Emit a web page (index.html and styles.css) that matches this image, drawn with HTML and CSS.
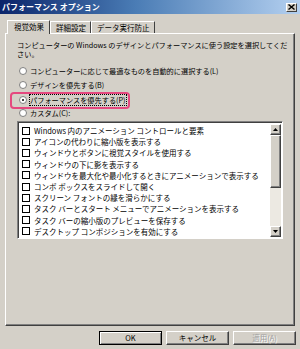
FILE: index.html
```html
<!DOCTYPE html>
<html lang="ja">
<head>
<meta charset="utf-8">
<link rel="stylesheet" href="styles.css">
</head>
<body>
<div class="dialog">
  <div class="titlebar">
    <span class="title">パフォーマンス オプション</span>
    <span class="close">
      <svg width="7" height="6" viewBox="0 0 7 6"><path d="M0.5 0.5 L6.5 5.5 M6.5 0.5 L0.5 5.5" stroke="#000" stroke-width="1.4"/></svg>
    </span>
  </div>
  <div class="tabs">
    <div class="tab active">視覚効果</div>
    <div class="tab">詳細設定</div>
    <div class="tab">データ実行防止</div>
  </div>
  <div class="panel">
    <p class="desc">コンピューターの Windows のデザインとパフォーマンスに使う設定を選択してくだ<br>さい。</p>
    <div class="radio"><span class="dot"></span><span>コンピューターに応じて最適なものを自動的に選択する(L)</span></div>
    <div class="radio"><span class="dot"></span><span>デザインを優先する(B)</span></div>
    <div class="radio"><span class="hl"><span class="dot on"></span><span class="focus">パフォーマンスを優先する(P)</span></span></div>
    <div class="radio"><span class="dot"></span><span>カスタム(C):</span></div>
    <div class="listbox">
      <ul class="items">
        <li><span class="cb"></span>Windows 内のアニメーション コントロールと要素</li>
        <li><span class="cb"></span>アイコンの代わりに縮小版を表示する</li>
        <li><span class="cb"></span>ウィンドウとボタンに視覚スタイルを使用する</li>
        <li><span class="cb"></span>ウィンドウの下に影を表示する</li>
        <li><span class="cb"></span>ウィンドウを最大化や最小化するときにアニメーションで表示する</li>
        <li><span class="cb"></span>コンボ ボックスをスライドして開く</li>
        <li><span class="cb"></span>スクリーン フォントの縁を滑らかにする</li>
        <li><span class="cb"></span>タスク バーとスタート メニューでアニメーションを表示する</li>
        <li><span class="cb"></span>タスク バーの縮小版のプレビューを保存する</li>
        <li><span class="cb"></span>デスクトップ コンポジションを有効にする</li>
      </ul>
      <div class="scrollbar">
        <div class="sbtn"><svg width="5" height="3" viewBox="0 0 5 3"><path d="M0 3 L2.5 0 L5 3Z" fill="#000"/></svg></div>
        <div class="thumb"></div>
        <div class="track"></div>
        <div class="sbtn"><svg width="5" height="3" viewBox="0 0 5 3"><path d="M0 0 L2.5 3 L5 0Z" fill="#000"/></svg></div>
      </div>
    </div>
  </div>
  <div class="buttons">
    <div class="btn default">OK</div>
    <div class="btn">キャンセル</div>
    <div class="btn disabled">適用(A)</div>
  </div>
</div>
</body>
</html>
```
FILE: styles.css
```css
html, body {
  margin: 0;
  padding: 0;
}
body {
  width: 300px;
  height: 349px;
  overflow: hidden;
  background: #d4d0c8;
  font-family: "Noto Sans CJK JP", "Liberation Sans", sans-serif;
  font-size: 7.5px;
  color: #000;
}
.dialog {
  width: 300px;
  height: 349px;
  display: flex;
  flex-direction: column;
}
.titlebar {
  height: 14px;
  background: linear-gradient(to right, #0a246a 0%, #4a7cb5 45%, #b4d0f0 100%);
  display: flex;
  align-items: center;
  justify-content: space-between;
  padding: 0 3px 0 2px;
}
.title {
  color: #fff;
  font-weight: bold;
  font-size: 8px;
  line-height: 14px;
}
.close {
  width: 11px;
  height: 9px;
  background: #d4d0c8;
  border-top: 1px solid #fff;
  border-left: 1px solid #fff;
  border-right: 1px solid #404040;
  border-bottom: 1px solid #404040;
  display: flex;
  align-items: center;
  justify-content: center;
  box-sizing: border-box;
}
.tabs {
  display: flex;
  align-items: flex-end;
  padding-left: 7px;
  margin-top: 6px;
  height: 13px;
  position: relative;
  z-index: 1;
}
.tab {
  height: 11px;
  line-height: 11px;
  padding: 0 4px 0 5px;
  border-top: 1px solid #fff;
  border-left: 1px solid #fff;
  border-right: 1px solid #404040;
  box-sizing: content-box;
  white-space: nowrap;
}
.tab.active {
  height: 13px;
  line-height: 12px;
  padding: 0 5px 0 6px;
  background: #d4d0c8;
  margin-bottom: -1px;
}
.panel {
  margin: 0 5px;
  border-top: 1px solid #fff;
  border-left: 1px solid #fff;
  border-right: 1px solid #404040;
  border-bottom: 1px solid #404040;
  box-shadow: inset -1px -1px 0 #808080;
  padding: 7px 11px 0 11px;
  box-sizing: border-box;
  height: 293px;
}
.desc {
  margin: 0;
  line-height: 9px;
  font-size: 7.2px;
  white-space: nowrap;
}
.radio {
  height: 14px;
  display: flex;
  align-items: center;
  gap: 3px;
  font-size: 7.2px;
  white-space: nowrap;
}
.desc + .radio {
  margin-top: 5px;
}
.dot {
  width: 8px;
  height: 8px;
  border-radius: 50%;
  background: #fff;
  border: 1px solid #808080;
  box-sizing: border-box;
  margin-left: 2px;
  position: relative;
  flex: none;
}
.dot.on::after {
  content: "";
  position: absolute;
  left: 2px;
  top: 2px;
  width: 2px;
  height: 2px;
  border-radius: 50%;
  background: #000;
}
.focus {
  outline: 1px dotted #000;
  outline-offset: 0;
}
.hl {
  display: flex;
  align-items: center;
  gap: 3px;
  margin-left: -7px;
  padding: 1px 2px 1px 5px;
  border: 2px solid #e5487f;
  border-radius: 4px;
  height: 17px;
  box-sizing: border-box;
  margin-top: 2px;
}
.listbox {
  margin-top: 1px;
  width: 266px;
  height: 118px;
  background: #fff;
  border-top: 1px solid #808080;
  border-left: 1px solid #808080;
  border-right: 1px solid #fff;
  border-bottom: 1px solid #fff;
  box-shadow: inset 1px 1px 0 #404040;
  box-sizing: border-box;
  display: flex;
  padding: 2px 1px 1px 2px;
}
.items {
  flex: 1;
  list-style: none;
  margin: 0;
  padding: 1px 0 0 2px;
}
.items li {
  height: 11.2px;
  line-height: 11px;
  display: flex;
  align-items: center;
  gap: 4px;
  white-space: nowrap;
}
.cb {
  width: 8px;
  height: 8px;
  border: 1.5px solid #000;
  box-sizing: border-box;
  background: #fff;
  flex: none;
}
.scrollbar {
  width: 11px;
  display: flex;
  flex-direction: column;
  background: #ece9e2;
}
.sbtn, .thumb {
  background: #d4d0c8;
  border-top: 1px solid #fff;
  border-left: 1px solid #fff;
  border-right: 1px solid #404040;
  border-bottom: 1px solid #404040;
  box-shadow: inset -1px -1px 0 #808080;
  box-sizing: border-box;
}
.sbtn {
  height: 11px;
  display: flex;
  align-items: center;
  justify-content: center;
}
.thumb {
  height: 53px;
}
.track {
  flex: 1;
}
.buttons {
  display: flex;
  justify-content: flex-end;
  gap: 4px;
  padding-right: 4px;
  margin-top: 5px;
}
.btn {
  width: 63px;
  height: 14px;
  line-height: 12px;
  text-align: center;
  border-top: 1px solid #fff;
  border-left: 1px solid #fff;
  border-right: 1px solid #404040;
  border-bottom: 1px solid #404040;
  box-shadow: inset -1px -1px 0 #808080;
  box-sizing: border-box;
}
.btn.default {
  border: 1px solid #000;
  box-shadow: inset 1px 1px 0 #fff, inset -1px -1px 0 #808080;
}
.btn.disabled {
  color: #a0a0a0;
  text-shadow: 1px 1px 0 #fff;
}
```
